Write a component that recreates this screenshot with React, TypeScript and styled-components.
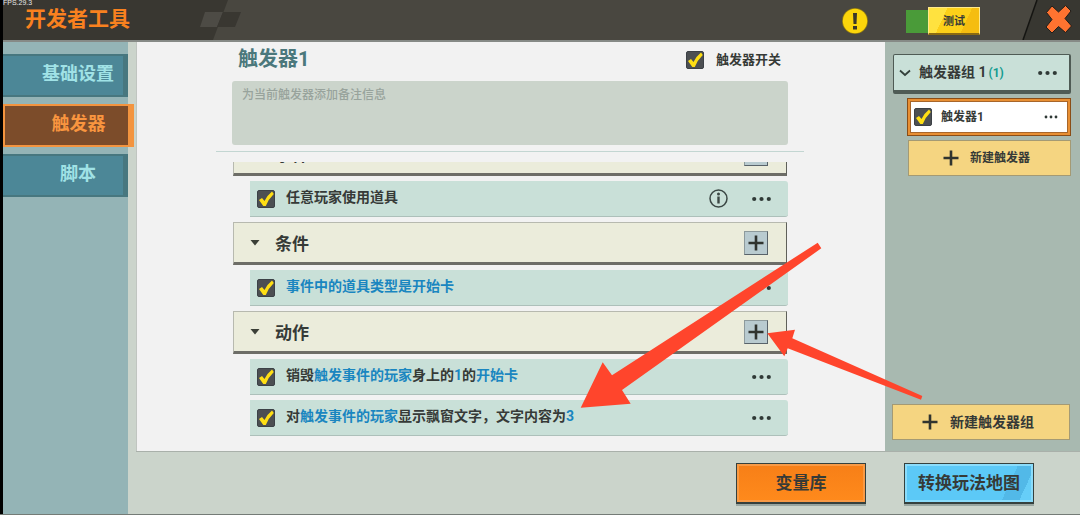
import React, { useLayoutEffect, useRef } from "react";
import styled, { createGlobalStyle } from "styled-components";

const ink = "#363a37";
const link = "#1a86c0";

const GlobalStyle = createGlobalStyle`
  *, *::before, *::after { box-sizing: border-box; }
  body {
    margin: 0;
    background: #000;
    color: ${ink};
    font-family: Roboto, "Noto Sans CJK SC", sans-serif;
    font-weight: 700;
  }
  button, input, textarea { font: inherit; color: inherit; margin: 0; }
  button { padding: 0; cursor: pointer; }
  h1, h2, h3, p, ul { margin: 0; padding: 0; font-weight: inherit; list-style: none; }
`;

const Shell = styled.div`
  position: relative;
  display: flex;
  flex-direction: column;
  height: 100vh;
  padding-left: 3px;
  border-bottom: 1px solid #747b76;
`;

/* ---------- header ---------- */

const Header = styled.header`
  display: flex;
  align-items: stretch;
  flex: none;
  height: 42px;
  background: #494740;
  border-bottom: 2px solid #868a86;
`;

const TitleBlock = styled.div`
  width: 197px;
  background: #393731;
  padding: 8px 0 0 22px;
`;

const Title = styled.h1`
  font-size: 21px;
  line-height: 22px;
  color: #f9811f;
`;

const Fps = styled.span`
  position: absolute;
  left: 3px;
  top: 0;
  font: 7px/6px "Liberation Sans", sans-serif;
  color: #e6e6e6;
`;

const HeaderTools = styled.div`
  display: flex;
  flex: 1;
  justify-content: flex-end;
  align-items: center;
`;

const PlainButton = styled.button`
  display: block;
  flex: none;
  border: 0;
  background: none;
  line-height: 0;
`;

const TestGroup = styled.div`
  display: flex;
  align-items: center;
  margin: 2px 42px 0 37px;
`;

const TestLamp = styled.span`
  width: 22px;
  height: 23px;
  background: #4a9b39;
`;

const TestButton = styled.button`
  width: 52px;
  height: 28px;
  padding-top: 2px;
  border: 1px solid #ffe98a;
  border-bottom: 2px solid #8a6a12;
  background: linear-gradient(115deg, #ffe23f 0 30%, #fcd019 30% 70%, #f5bd10 70%);
  font-size: 11px;
  line-height: 22px;
`;

const CloseCorner = styled.div`
  display: flex;
  background: #383731;
`;

/* ---------- body ---------- */

const Body = styled.div`
  display: flex;
  flex: 1;
  min-height: 0;
  background: #cbd4cb;
`;

const Sidebar = styled.nav`
  display: flex;
  flex-direction: column;
  gap: 7px;
  flex: none;
  width: 125px;
  padding-top: 12px;
  background: #94b4b6;
`;

const Tab = styled.button<{ $active?: boolean }>`
  flex: none;
  height: 43px;
  padding: 0 0 4px ${(p) => (p.$active ? "24px" : "30px")};
  border: solid ${(p) => (p.$active ? "#f3943f" : "#47777f")};
  border-width: ${(p) => (p.$active ? "2px 6px 2px 2px" : "2px 5px 2px 0")};
  margin-right: ${(p) => (p.$active ? "-6px" : "0")};
  background: ${(p) => (p.$active ? "#7c4c2a" : "#4c8797")};
  color: ${(p) => (p.$active ? "#f9953f" : "#a0e2e6")};
  font-size: 18px;
  line-height: 32px;
`;

const Workspace = styled.div`
  display: flex;
  flex-direction: column;
  flex: 1;
  min-width: 0;
  margin-left: 8px;
`;

const Panels = styled.div`
  display: flex;
  flex: 1;
  min-height: 0;
  border-bottom: 1px solid #a9b0aa;
`;

const Editor = styled.main`
  display: flex;
  flex-direction: column;
  flex: 1;
  min-width: 0;
  padding: 0 97px 0 95px;
  background: #f2f2f2;
  border-left: 1px solid #c0c5c0;
`;

const EditorHead = styled.div`
  display: flex;
  align-items: center;
  justify-content: space-between;
  flex: none;
  height: 36px;
  margin-bottom: 3px;
  padding: 0 7px 0 6px;
`;

const TriggerName = styled.h2`
  font-size: 20px;
  line-height: 32px;
  padding-bottom: 2px;
  color: #4b787c;
`;

const CheckLabel = styled.label<{ $size: number }>`
  display: flex;
  align-items: center;
  gap: 12px;
  font-size: ${(p) => p.$size}px;
  line-height: 20px;
`;

const CheckFrame = styled.span`
  display: grid;
  flex: none;
  width: 18px;
  height: 18px;

  input, svg { grid-area: 1 / 1; }
  input {
    appearance: none;
    width: 18px;
    height: 18px;
    border-radius: 2px;
    border: 1px solid #3c4146;
    background: #4c4f52;
  }
  svg { z-index: 1; pointer-events: none; }
`;

const Note = styled.textarea`
  display: block;
  flex: none;
  width: 100%;
  height: 64px;
  padding: 4px 10px;
  border: 0;
  border-radius: 3px;
  background: #cbd4cb;
  resize: none;
  font-size: 12px;
  font-weight: 500;
  line-height: 20px;

  &::placeholder { color: #98a39c; opacity: 1; }
`;

const Divider = styled.hr`
  flex: none;
  width: auto;
  height: 1px;
  margin: 6px -16px 10px;
  border: 0;
  background: #c3d6d2;
`;

const Script = styled.div`
  display: flex;
  flex-direction: column;
  gap: 5px;
  flex: 1;
  min-height: 0;
  padding-bottom: 15px;
  overflow-y: auto;
  scrollbar-width: none;
`;

const Section = styled.section`
  display: flex;
  flex-direction: column;
  gap: 5px;
  flex: none;
`;

const SectionHead = styled.header`
  display: flex;
  align-items: center;
  height: 43px;
  margin: 0 1px;
  padding: 0 18px 0 16px;
  border: solid;
  border-width: 1px 1px 3px 1px;
  border-color: #b7b9af #5f605a #6d6d67 #b7b9af;
  background: #ebecdb;
`;

const SectionTitle = styled.h3`
  flex: 1;
  margin-left: 15px;
  padding-top: 2px;
  font-size: 17px;
  line-height: 24px;
`;

const AddButton = styled.button`
  display: grid;
  place-items: center;
  width: 24px;
  height: 24px;
  border: 1px solid #8d9a9c;
  border-right-color: #59636a;
  border-bottom-color: #59636a;
  background: #b9cbd0;
`;

const Rows = styled.ul`
  display: flex;
  flex-direction: column;
  gap: 5px;
  margin-left: 18px;
`;

const Row = styled.li`
  display: flex;
  align-items: center;
  gap: 24px;
  height: 36px;
  padding: 0 17px 0 7px;
  border-bottom: 1px solid #adc0ba;
  border-radius: 0 3px 3px 0;
  background: #c9e0d8;
`;

const RowLabel = styled(CheckLabel)`
  flex: 1;
  gap: 11px;
  white-space: nowrap;
`;

const RowText = styled.span`
  padding-bottom: 3px;
`;

const Param = styled.span`
  color: ${link};
`;

/* ---------- group panel ---------- */

const Groups = styled.aside`
  display: flex;
  flex-direction: column;
  align-items: stretch;
  gap: 4px;
  flex: none;
  width: 195px;
  padding: 12px 9px 11px 8px;
  background: #a8b9b0;
`;

const GroupHead = styled.div`
  display: flex;
  align-items: center;
  height: 40px;
  padding: 0 12px 0 5px;
  border: solid #4f5b55;
  border-width: 1px 2px 4px 1px;
  border-radius: 2px;
  background: #c9e0d8;
`;

const GroupName = styled.h2`
  flex: 1;
  margin-left: 8px;
  font-size: 14px;
  line-height: 20px;
`;

const Count = styled.span`
  margin-left: 2px;
  font-size: 12px;
  color: #149c90;
`;

const GroupItem = styled.div`
  display: flex;
  align-items: center;
  justify-content: space-between;
  height: 38px;
  margin-left: 14px;
  padding: 0 12px 0 3px;
  border: 1px solid #8a4d17;
  box-shadow: inset 0 0 0 2px #e88f33, inset 0 0 0 3px #a8662a;
  background: #fff;

  label { gap: 9px; padding-left: 3px; }
`;

const CreateButton = styled.button<{ $nested?: boolean }>`
  display: flex;
  align-items: center;
  justify-content: center;
  gap: ${(p) => (p.$nested ? 11 : 12)}px;
  flex: none;
  height: 36px;
  padding-right: 6px;
  margin: ${(p) => (p.$nested ? "0 0 0 15px" : "auto 1px 0 -1px")};
  border: 1px solid #a49a74;
  background: #f5d581;
  font-size: ${(p) => (p.$nested ? 12 : 14)}px;
  line-height: 20px;
`;

/* ---------- footer ---------- */

const Footer = styled.footer`
  display: flex;
  justify-content: flex-end;
  gap: 38px;
  flex: none;
  height: 62px;
  padding: 11px 46px 0 0;
`;

const ActionButton = styled.button<{ $tone: "orange" | "blue" }>`
  width: 130px;
  height: 41px;
  border: 1px solid #35403d;
  border-bottom-width: 2px;
  background: ${(p) =>
    p.$tone === "orange"
      ? "linear-gradient(#f77f17, #ff8a1c)"
      : "linear-gradient(115deg, #5cc9f7 0 78%, #52b9e8 78% 90%, #66cef8 90%)"};
  box-shadow:
    inset 0 0 0 2px ${(p) => (p.$tone === "orange" ? "#f99a45" : "#8adcfb")},
    0 2px 0 #98a5a0;
  font-size: 17px;
  line-height: 34px;
`;

const Pointers = styled.svg`
  position: absolute;
  left: 0;
  top: 0;
  pointer-events: none;
`;

/* ---------- small drawings ---------- */

const Check = ({ label }: { label?: string }) => (
  <CheckFrame>
    <input type="checkbox" defaultChecked aria-label={label} />
    <svg width="18" height="18" viewBox="0 0 18 18">
      <path d="M2 10L5 8L7.5 11Q10.5 5 15 1.5L16.8 4Q11.5 9 8.8 16L6.3 16Z" fill="#ffdf14" />
    </svg>
  </CheckFrame>
);

const Dots = ({ label, small }: { label: string; small?: boolean }) => (
  <PlainButton aria-label={label}>
    <svg width={small ? 14 : 19} height="6" viewBox={small ? "0 0 14 6" : "0 0 19 6"} fill="#2f3936">
      {(small ? [2, 7, 12] : [2.2, 9.5, 16.8]).map((x) => (
        <circle key={x} cx={x} cy="3" r={small ? 1.4 : 2.1} />
      ))}
    </svg>
  </PlainButton>
);

const Plus = () => (
  <svg width="16" height="16" viewBox="0 0 16 16" stroke="#30342f" strokeWidth="2.6">
    <path d="M8 0.5V15.5M0.5 8H15.5" />
  </svg>
);

const SectionBar = ({ title }: { title: string }) => (
  <SectionHead>
    <svg width="10" height="6" viewBox="0 0 10 6">
      <path d="M0.5 0H9.5L5 5.5Z" fill="#3b3f37" />
    </svg>
    <SectionTitle>{title}</SectionTitle>
    <AddButton aria-label={`添加${title}`}>
      <Plus />
    </AddButton>
  </SectionHead>
);

const Statement = ({ children, info }: { children: React.ReactNode; info?: boolean }) => (
  <Row>
    <RowLabel $size={14}>
      <Check />
      <RowText>{children}</RowText>
    </RowLabel>
    {info && (
      <PlainButton aria-label="说明">
        <svg width="19" height="19" viewBox="0 0 19 19">
          <circle cx="9.5" cy="9.5" r="8.5" fill="none" stroke="#3b4744" strokeWidth="1.5" />
          <circle cx="9.5" cy="5" r="1.5" fill="#3b4744" />
          <path d="M9.5 7.5V14.5" stroke="#3b4744" strokeWidth="2.4" />
        </svg>
      </PlainButton>
    )}
    <Dots label="更多" />
  </Row>
);

export default function App() {
  const script = useRef<HTMLDivElement>(null);

  useLayoutEffect(() => {
    if (script.current) script.current.scrollTop = script.current.scrollHeight;
  }, []);

  return (
    <Shell>
      <GlobalStyle />
      <Header>
        <TitleBlock>
          <Title>开发者工具</Title>
        </TitleBlock>
        <svg width="44" height="40" viewBox="0 0 44 40">
          <path d="M0 0H28L13 40H0Z" fill="#393731" />
          <path d="M5 12H23L17 27H0Z" fill="#4d4b45" />
          <path d="M23 12H41L35 27H17Z" fill="#393731" />
        </svg>
        <HeaderTools>
          <PlainButton aria-label="警告">
            <svg width="28" height="28" viewBox="0 0 28 28">
              <circle cx="14" cy="15" r="13" fill="#8d7713" />
              <circle cx="14" cy="15" r="12.2" fill="#fbd50b" />
              <path d="M12 7H16L15.5 18H12.5ZM12 20H16V23.5H12Z" fill="#3a372a" />
            </svg>
          </PlainButton>
          <TestGroup>
            <TestLamp />
            <TestButton>测试</TestButton>
          </TestGroup>
        </HeaderTools>
        <CloseCorner>
          <PlainButton aria-label="关闭">
            <svg width="58" height="40" viewBox="0 0 58 40">
              <path d="M0 0H15L1 40H0Z" fill="#494740" />
              <path d="M15 0L1 40" stroke="#151512" strokeWidth="1.5" />
              <path
                d="M30 6L36.5 12L43.5 5.5L49 11L43 18.5L49.5 26L43.5 32.5L36.5 26.5L30 33L24 27L30 19.5L24.5 12.5Z"
                fill="#ff7330"
                stroke="#211d19"
                strokeWidth="1"
                strokeLinejoin="round"
              />
            </svg>
          </PlainButton>
        </CloseCorner>
      </Header>
      <Fps>FPS.29.3</Fps>

      <Body>
        <Sidebar>
          <Tab>基础设置</Tab>
          <Tab $active>触发器</Tab>
          <Tab>脚本</Tab>
        </Sidebar>

        <Workspace>
          <Panels>
            <Editor>
              <EditorHead>
                <TriggerName>触发器1</TriggerName>
                <CheckLabel $size={13}>
                  <Check />
                  触发器开关
                </CheckLabel>
              </EditorHead>
              <Note aria-label="备注" placeholder="为当前触发器添加备注信息" />
              <Divider />
              <Script ref={script}>
                <Section>
                  <SectionBar title="事件" />
                  <Rows>
                    <Statement info>任意玩家使用道具</Statement>
                  </Rows>
                </Section>
                <Section>
                  <SectionBar title="条件" />
                  <Rows>
                    <Statement>
                      <Param>事件中的道具类型是开始卡</Param>
                    </Statement>
                  </Rows>
                </Section>
                <Section>
                  <SectionBar title="动作" />
                  <Rows>
                    <Statement>
                      销毁<Param>触发事件的玩家</Param>身上的<Param>1</Param>的<Param>开始卡</Param>
                    </Statement>
                    <Statement>
                      对<Param>触发事件的玩家</Param>显示飘窗文字，文字内容为<Param>3</Param>
                    </Statement>
                  </Rows>
                </Section>
              </Script>
            </Editor>

            <Groups>
              <GroupHead>
                <svg width="12" height="8" viewBox="0 0 12 8">
                  <path d="M1 1.5L6 6L11 1.5" fill="none" stroke="#33403b" strokeWidth="1.8" />
                </svg>
                <GroupName>
                  触发器组 1<Count>(1)</Count>
                </GroupName>
                <Dots label="触发器组菜单" />
              </GroupHead>
              <GroupItem>
                <CheckLabel $size={12}>
                  <Check />
                  触发器1
                </CheckLabel>
                <Dots label="触发器菜单" small />
              </GroupItem>
              <CreateButton $nested>
                <Plus />
                新建触发器
              </CreateButton>
              <CreateButton>
                <Plus />
                新建触发器组
              </CreateButton>
            </Groups>
          </Panels>

          <Footer>
            <ActionButton $tone="orange">变量库</ActionButton>
            <ActionButton $tone="blue">转换玩法地图</ActionButton>
          </Footer>
        </Workspace>
      </Body>

      <Pointers width="1080" height="514" viewBox="0 0 1080 514" fill="#ff452c" aria-hidden="true">
        <path d="M580.7 407.7L602.7 362.3L612 375.3L817.7 242.7L821.3 248.3L622 390L630.7 403.7Z" />
        <path d="M767.3 333.3L795 329.7L792.3 338.3L922.3 396L921 399.7L787.7 348.3L784.3 356.3Z" />
      </Pointers>
    </Shell>
  );
}
